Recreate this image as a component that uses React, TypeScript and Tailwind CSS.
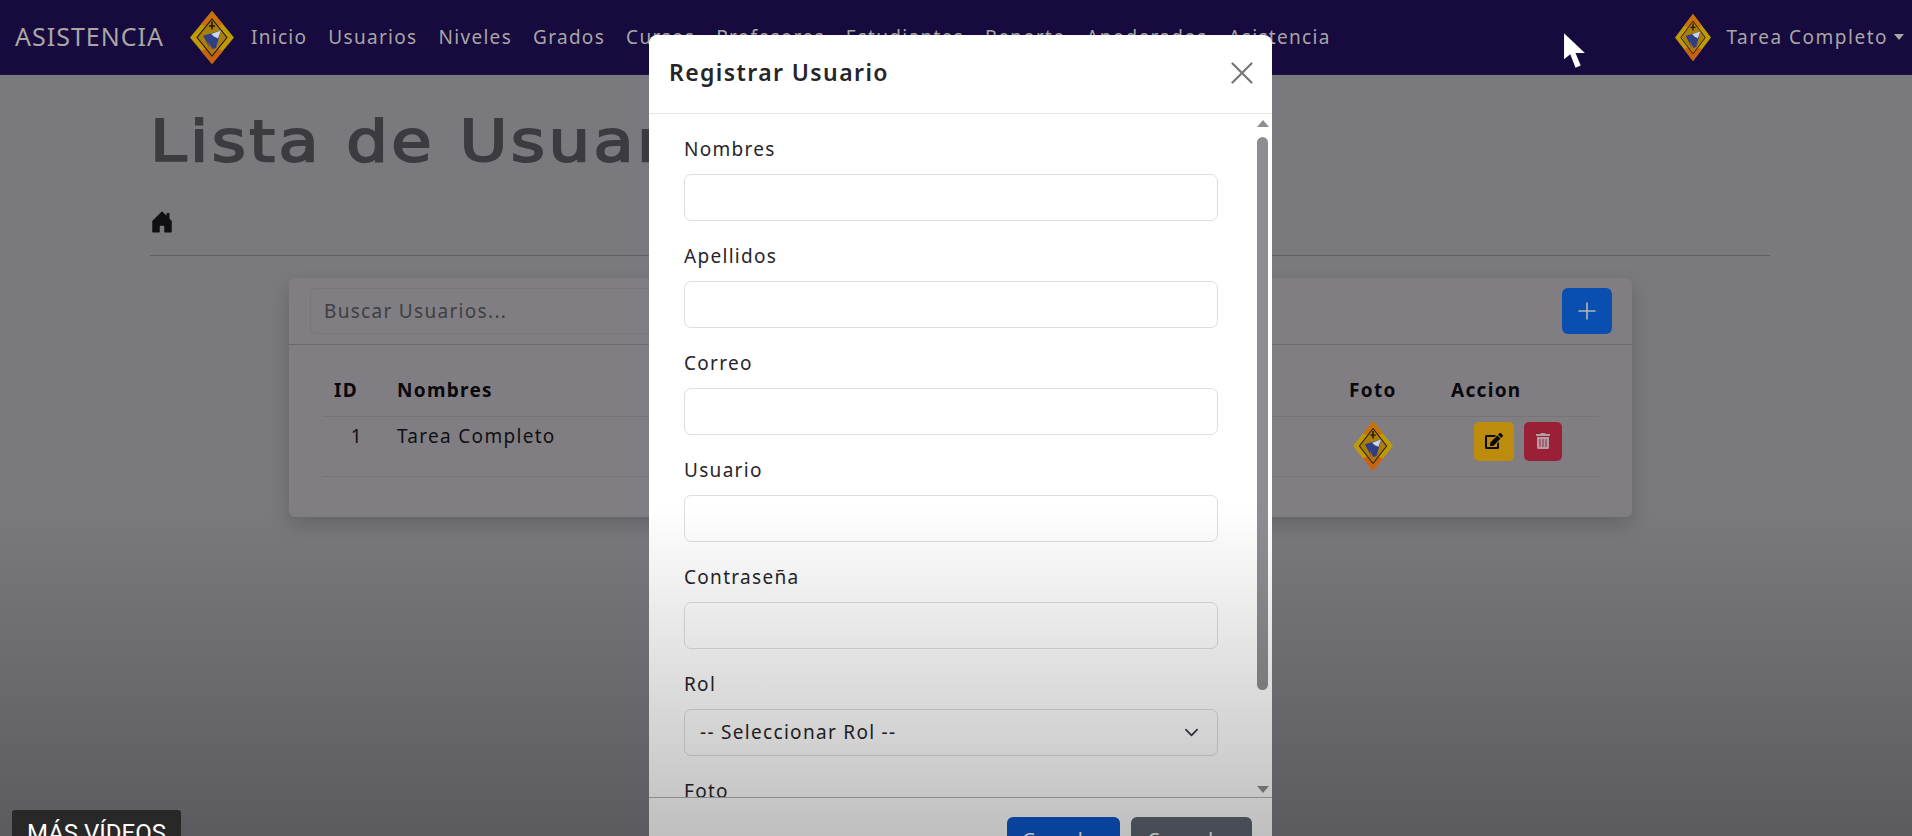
import React from 'react';
import { FaEdit, FaTrashAlt } from 'react-icons/fa';
import { BsHouseDoorFill } from 'react-icons/bs';

const navLinks = ['Inicio', 'Usuarios', 'Niveles', 'Grados', 'Cursos', 'Profesores', 'Estudiantes', 'Reporte', 'Apoderados', 'Asistencia'];

const fields = ['Nombres', 'Apellidos', 'Correo', 'Usuario', 'Contraseña'];

function Logo({ className }: { className: string }) {
  return (
    <svg viewBox="0 0 44 60" preserveAspectRatio="none" className={className}>
      <polygon points="22,0 44,30 22,60 0,30" fill="#bf9a08" />
      <polygon points="22,0 33,15 22,20 11,15" fill="#c9700f" />
      <polygon points="22,60 33,45 22,40 11,45" fill="#c9620f" />
      <polygon points="22,9 37,30 22,51 7,30" fill="#a97f0a" stroke="#2a1c10" strokeWidth="1.2" />
      <path d="M13 28 L31 22 L29 30 L26 42 L20 44 L17 36 Z" fill="#2f3f86" />
      <path d="M21 26 L31 22 L28 31 L24 29 Z" fill="#cdd3e4" />
      <path d="M18 35 L23 44 L20 45 Z" fill="#c9620f" />
      <path d="M22 12 L22 21 M19 17 L25 17" stroke="#231606" strokeWidth="1.6" />
    </svg>
  );
}

export default function App() {
  return (
    <div className="relative h-[836px] w-[1912px] overflow-hidden bg-[#7a797e] font-['Noto_Sans',sans-serif] text-[19px] tracking-[1.3px] text-[#111014]">
      {/* Navbar */}
      <nav className="flex h-[75px] items-center border-b border-[#1d1245] bg-[#160a3e] text-[#a9a6a4]">
        <span className="ml-[15px] text-[25px] tracking-[1px]">ASISTENCIA</span>
        <Logo className="ml-[26px] h-[53px] w-[44px]" />
        <div className="ml-[17px] flex gap-[21px]">
          {navLinks.map((link) => (
            <a key={link}>{link}</a>
          ))}
        </div>
        <div className="ml-auto mr-[8px] flex items-center">
          <Logo className="h-[47px] w-[36px]" />
          <span className="ml-[16px] tracking-[1.5px]">Tarea Completo</span>
          <span className="ml-[6px] h-0 w-0 border-x-[5px] border-t-[6px] border-x-transparent border-t-[#a9a6a4]" />
        </div>
      </nav>

      {/* Page */}
      <main className="px-[150px]">
        <h1 className="mt-[28px] origin-left scale-x-[1.15] font-['DejaVu_Sans',sans-serif] text-[57px] leading-[76px] tracking-[3px] text-[#3c3b40] [-webkit-text-stroke:2px_#3c3b40]">
          Lista de Usuarios
        </h1>
        <div className="mt-[31px] text-[24px] text-[#0f0f14]">
          <BsHouseDoorFill />
        </div>
        <hr className="mt-[21px] w-[1620px] border-[#5f5e63]" />

        <section className="ml-[139px] mt-[22px] w-[1343px] rounded-[6px] bg-[#807e82] shadow-[0_8px_20px_rgba(0,0,0,0.18)]">
          <div className="flex h-[67px] items-center justify-between border-b border-[#69686c] pl-[21px] pr-[20px]">
            <div className="flex h-[46px] w-[500px] items-center rounded-[6px] border border-[#78767a] px-[13px] text-[#3f3e42]">
              Buscar Usuarios...
            </div>
            <button className="flex h-[46px] w-[50px] items-center justify-center rounded-[6px] bg-[#0a4eb0]">
              <svg viewBox="0 0 20 20" className="h-[20px] w-[20px]" stroke="#b4b4b8" strokeWidth="1.6" strokeLinecap="round">
                <path d="M10 2 V18 M2 10 H18" />
              </svg>
            </button>
          </div>
          <div className="px-[33px] pb-[40px] pt-[31px]">
            <div className="grid grid-cols-[75px_952px_102px_1fr] border-b border-[#767478] pb-[11px] font-bold text-[#09080c]">
              <span className="pl-[12px]">ID</span>
              <span>Nombres</span>
              <span>Foto</span>
              <span>Accion</span>
            </div>
            <div className="grid h-[60px] grid-cols-[75px_952px_125px_1fr] border-b border-[#767478]">
              <span className="pr-[34px] pt-[5px] text-right">1</span>
              <span className="pt-[5px]">Tarea Completo</span>
              <Logo className="ml-[4px] mt-[4px] h-[50px] w-[40px]" />
              <div className="mt-[5px] flex gap-[10px]">
                <button className="flex h-[39px] w-[40px] items-center justify-center rounded-[5px] bg-[#bd8c0c] text-[18px] text-[#0b0906]">
                  <FaEdit />
                </button>
                <button className="flex h-[39px] w-[38px] items-center justify-center rounded-[5px] bg-[#9a2038] text-[16px] text-[#b09ea2]">
                  <FaTrashAlt />
                </button>
              </div>
            </div>
          </div>
        </section>
      </main>

      {/* Modal */}
      <div className="absolute left-[649px] top-[35px] flex h-[840px] w-[623px] flex-col rounded-t-[8px] bg-white text-[#26252a]">
        <div className="flex h-[79px] shrink-0 items-center justify-between border-b border-[#e4e4e6] pb-[3px] pl-[20px] pr-[19px]">
          <h2 className="text-[23px] font-semibold leading-none tracking-[1.4px]">Registrar Usuario</h2>
          <svg viewBox="0 0 22 22" className="h-[22px] w-[22px]" stroke="#77767a" strokeWidth="2.2" strokeLinecap="round">
            <path d="M1.5 1.5 L20.5 20.5 M20.5 1.5 L1.5 20.5" />
          </svg>
        </div>
        <div className="relative h-[684px] shrink-0 overflow-hidden border-b border-[#b4b4b4] px-[35px] pt-[20px]">
          {fields.map((field) => (
            <div key={field} className="mb-[20px] w-[534px]">
              <label className="block h-[32px] leading-[30px]">{field}</label>
              <div className="mt-[8px] h-[47px] rounded-[7px] border border-[#dedee0]" />
            </div>
          ))}
          <div className="mb-[20px] w-[534px]">
            <label className="block h-[32px] leading-[30px]">Rol</label>
            <div className="mt-[8px] flex h-[47px] items-center justify-between rounded-[7px] border border-[#dedee0] pl-[15px] pr-[18px]">
              <span>-- Seleccionar Rol --</span>
              <svg viewBox="0 0 16 16" className="h-[15px] w-[15px]" fill="none" stroke="#343a40" strokeWidth="1.8" strokeLinecap="round" strokeLinejoin="round">
                <path d="M2 5l6 6 6-6" />
              </svg>
            </div>
          </div>
          <label className="block h-[32px] leading-[30px]">Foto</label>

          {/* Scrollbar */}
          <div className="absolute right-[4px] top-[6px] h-[672px] w-[11px]">
            <div className="mx-auto h-0 w-0 border-x-[6px] border-b-[7px] border-x-transparent border-b-[#8e8d91]" />
            <div className="mt-[10px] h-[553px] rounded-full bg-[#8e8d91]" />
            <div className="absolute bottom-[-1px] left-0 h-0 w-0 border-x-[6px] border-t-[7px] border-x-transparent border-t-[#8e8d91]" />
          </div>
        </div>
        <div className="flex justify-end gap-[11px] pr-[20px] pt-[19px] text-white">
          <button className="flex h-[47px] w-[113px] items-center justify-center rounded-[6px] bg-[#0d58ce]">Guardar</button>
          <button className="flex h-[47px] w-[121px] items-center justify-center rounded-[6px] bg-[#5f6570]">Cancelar</button>
        </div>
      </div>

      {/* Video player gradient */}
      <div className="pointer-events-none absolute inset-x-0 bottom-0 h-[330px] bg-gradient-to-b from-transparent to-black/25" />

      {/* Mouse cursor */}
      <svg viewBox="0 0 24 36" className="absolute left-[1563px] top-[32px] h-[38px] w-[25px]">
        <path d="M1 1 L1 26 L7 21 L12 34 L17 32 L12 20 L21 20 Z" fill="#ffffff" />
      </svg>

      <div className="absolute left-[12px] top-[810px] h-[40px] w-[169px] rounded-t-[3px] bg-[#282828] pl-[15px] pt-[6px] font-['Roboto',sans-serif] text-[24px] leading-[34px] tracking-normal text-white">
        MÁS VÍDEOS
      </div>
    </div>
  );
}
